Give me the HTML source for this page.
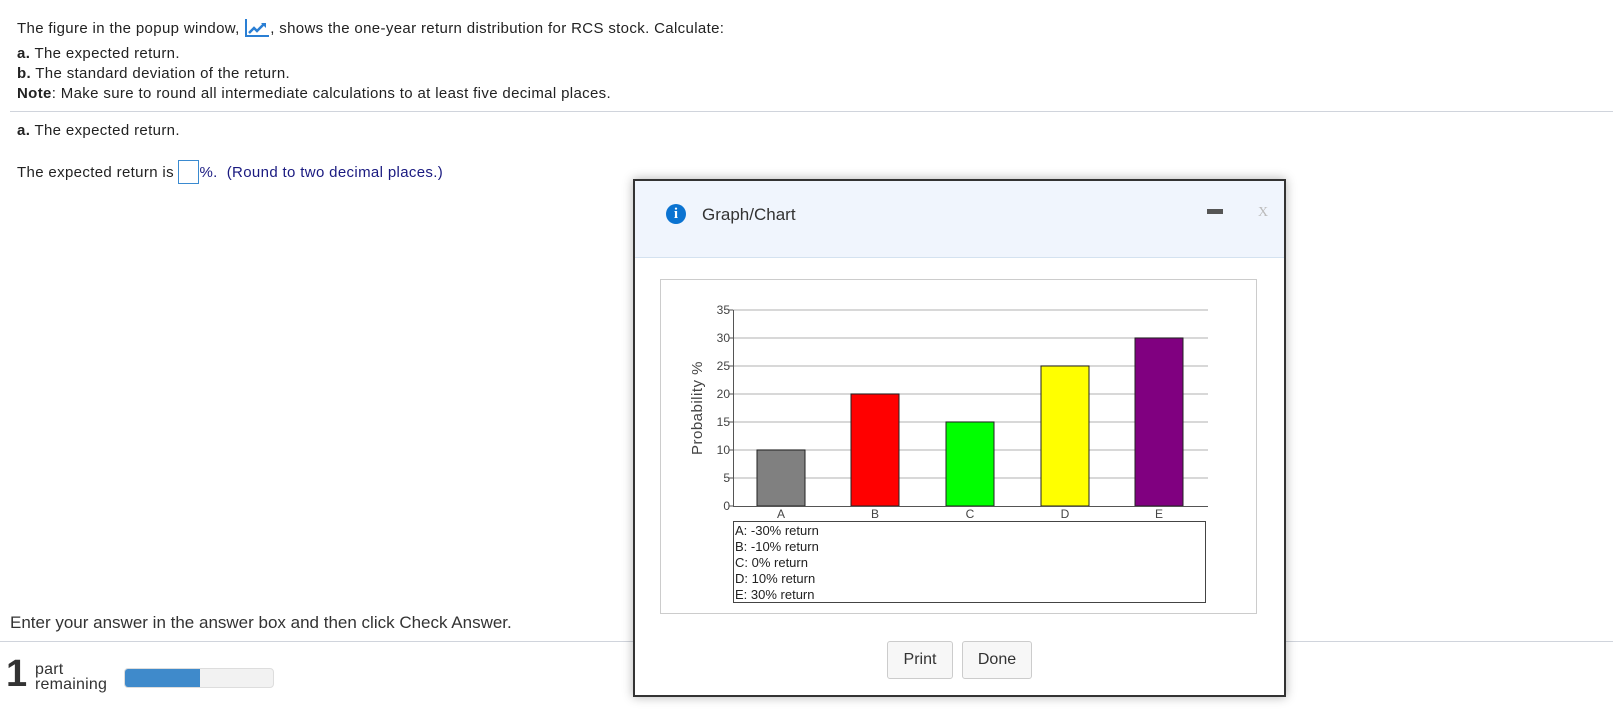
<!DOCTYPE html>
<html><head><meta charset="utf-8"><style>
body{margin:0;width:1613px;height:717px;overflow:hidden;background:#fff;font-family:"Liberation Sans",Arial,sans-serif;color:#222;position:relative}
.t{position:absolute;font-size:15px;letter-spacing:0.35px;white-space:nowrap}
.hr{position:absolute;height:1px;background:#d0d4dc}
</style></head><body>
<div class="t" style="left:17px;top:18px">The figure in the popup window, <svg width="26" height="20" style="vertical-align:-5px" viewBox="0 0 26 20"><path d="M2 1V18H25" stroke="#2a7fd4" stroke-width="2" fill="none"/><path d="M5 15L10 10L13 13L20 6" stroke="#2a7fd4" stroke-width="2.5" fill="none"/><path d="M17 5H22V10Z" fill="#2a7fd4"/></svg>, shows the one-year return distribution for RCS stock. Calculate:</div>
<div class="t" style="left:17px;top:45px"><b>a.</b> The expected return.</div>
<div class="t" style="left:17px;top:65px"><b>b.</b> The standard deviation of the return.</div>
<div class="t" style="left:17px;top:85px"><b>Note</b>: Make sure to round all intermediate calculations to at least five decimal places.</div>
<div class="hr" style="left:10px;top:111px;width:1603px"></div>
<div class="t" style="left:17px;top:122px"><b>a.</b> The expected return.</div>
<div class="t" style="left:17px;top:160px">The expected return is <span style="display:inline-block;width:19px;height:22px;border:1px solid #3a8ad0;vertical-align:-7px"></span><span style="color:#1a1a80">%.&nbsp; (Round to two decimal places.)</span></div>
<div class="t" style="left:10px;top:613px;font-size:17px;letter-spacing:0;color:#333">Enter your answer in the answer box and then click Check Answer.</div>
<div class="hr" style="left:0;top:641px;width:1613px"></div>
<div class="t" style="left:6px;top:653px;font-size:38px;color:#333;font-weight:bold;letter-spacing:0">1</div>
<div class="t" style="left:35px;top:662px;font-size:16px;color:#333;line-height:15px;letter-spacing:0.2px">part<br>remaining</div>
<div style="position:absolute;left:124px;top:668px;width:150px;height:20px;border-radius:4px;background:#f2f2f2;overflow:hidden;border:1px solid #ddd;box-sizing:border-box"><div style="width:75px;height:100%;background:#3f8acb"></div></div>

<div style="position:absolute;left:633px;top:179px;width:649px;height:514px;border:2px solid #333;background:#fff;box-shadow:0 0 10px rgba(0,0,0,.3)">
 <div style="height:76px;background:#f0f5fd;border-bottom:1px solid #d4e2f0;position:relative">
  <div style="position:absolute;left:31px;top:23px;width:20px;height:20px;border-radius:50%;background:#0b73d1;color:#fff;font:bold 15px 'Liberation Serif',serif;text-align:center;line-height:21px">i</div>
  <div class="t" style="left:67px;top:24px;font-size:17px;letter-spacing:0;color:#333">Graph/Chart</div>
  <div style="position:absolute;left:572px;top:28px;width:16px;height:5px;background:#555"></div>
  <div class="t" style="left:623px;top:24px;font-size:14px;color:#bbb;font-family:'Liberation Serif',serif">X</div>
 </div>
</div>
<div style="position:absolute;left:660px;top:279px;width:595px;height:333px;border:1px solid #ccc"></div>
<svg style="position:absolute;left:0;top:0" width="1613" height="717">
<g stroke="#ccc" stroke-width="1.5">
<line x1="733" x2="1208" y1="310" y2="310"/><line x1="733" x2="1208" y1="338" y2="338"/><line x1="733" x2="1208" y1="366" y2="366"/><line x1="733" x2="1208" y1="394" y2="394"/><line x1="733" x2="1208" y1="422" y2="422"/><line x1="733" x2="1208" y1="450" y2="450"/><line x1="733" x2="1208" y1="478" y2="478"/>
</g>
<g stroke="#222" stroke-width="1">
<rect x="757" y="450" width="48" height="56" fill="#808080"/>
<rect x="851" y="394" width="48" height="112" fill="#f00"/>
<rect x="946" y="422" width="48" height="84" fill="#0f0"/>
<rect x="1041" y="366" width="48" height="140" fill="#ff0"/>
<rect x="1135" y="338" width="48" height="168" fill="#800080"/>
</g>
<g stroke="#555"><line x1="733.5" y1="310" x2="733.5" y2="506"/><line x1="733" y1="506.5" x2="1208" y2="506.5"/>
<line x1="729" x2="733" y1="310" y2="310"/><line x1="729" x2="733" y1="338" y2="338"/><line x1="729" x2="733" y1="366" y2="366"/><line x1="729" x2="733" y1="394" y2="394"/><line x1="729" x2="733" y1="422" y2="422"/><line x1="729" x2="733" y1="450" y2="450"/><line x1="729" x2="733" y1="478" y2="478"/><line x1="729" x2="733" y1="506" y2="506"/></g>
<g font-family="Liberation Sans,sans-serif" font-size="12" fill="#444" text-anchor="end">
<text x="730" y="314">35</text><text x="730" y="342">30</text><text x="730" y="370">25</text><text x="730" y="398">20</text><text x="730" y="426">15</text><text x="730" y="454">10</text><text x="730" y="482">5</text><text x="730" y="510">0</text>
</g>
<g font-family="Liberation Sans,sans-serif" font-size="12" fill="#444" text-anchor="middle">
<text x="781" y="518">A</text><text x="875" y="518">B</text><text x="970" y="518">C</text><text x="1065" y="518">D</text><text x="1159" y="518">E</text>
</g>
<text transform="translate(702,408) rotate(-90)" text-anchor="middle" font-family="Liberation Sans,sans-serif" font-size="15" fill="#444" letter-spacing="0.5">Probability %</text>
<rect x="733.5" y="521.5" width="472" height="81" fill="#fff" stroke="#444"/>
<g font-family="Liberation Sans,sans-serif" font-size="13" fill="#222">
<text x="735" y="535">A: -30% return</text><text x="735" y="551">B: -10% return</text><text x="735" y="567">C: 0% return</text><text x="735" y="583">D: 10% return</text><text x="735" y="599">E: 30% return</text>
</g>
</svg>
<div style="position:absolute;left:887px;top:641px;width:64px;height:36px;border:1px solid #ccc;border-radius:3px;background:#f7f7f7;font-size:16px;color:#333;text-align:center;line-height:36px">Print</div>
<div style="position:absolute;left:962px;top:641px;width:68px;height:36px;border:1px solid #ccc;border-radius:3px;background:#f7f7f7;font-size:16px;color:#333;text-align:center;line-height:36px">Done</div>
</body></html>
